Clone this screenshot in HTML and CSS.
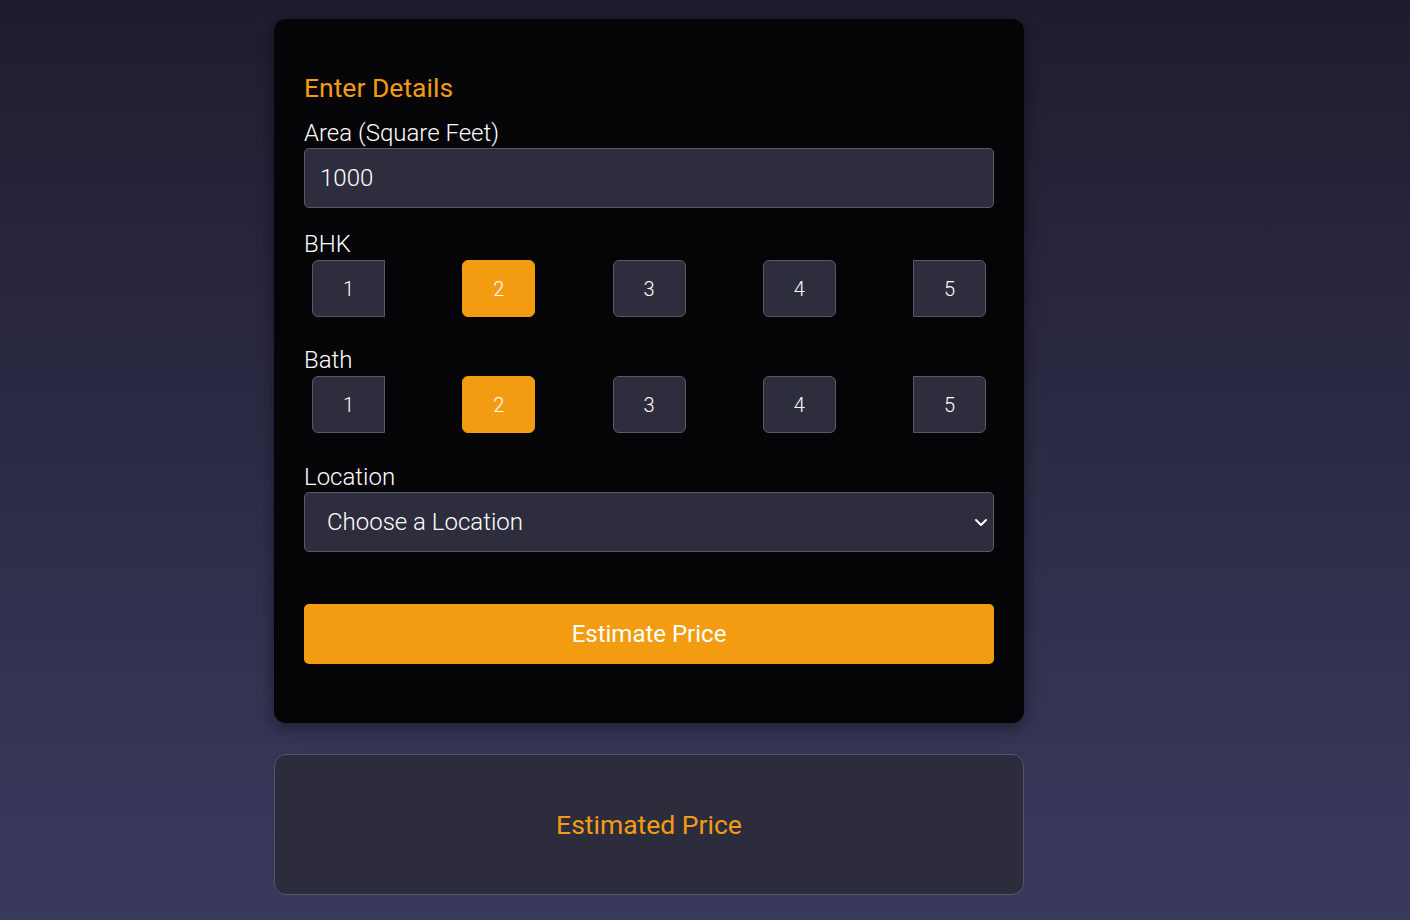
FILE: index.html
```html
<!DOCTYPE html>
<html>
<head>
<meta charset="utf-8">
<link rel="stylesheet" href="styles.css">
</head>
<body>
<main class="page">
  <form class="card">
    <h2 class="title">Enter Details</h2>
    <label class="label" for="area">Area (Square Feet)</label>
    <input class="field" id="area" type="text" value="1000">

    <div class="label group-label">BHK</div>
    <div class="switch">
      <span class="opt first">1</span>
      <span class="opt active">2</span>
      <span class="opt">3</span>
      <span class="opt">4</span>
      <span class="opt last">5</span>
    </div>

    <div class="label group-label">Bath</div>
    <div class="switch">
      <span class="opt first">1</span>
      <span class="opt active">2</span>
      <span class="opt">3</span>
      <span class="opt">4</span>
      <span class="opt last">5</span>
    </div>

    <label class="label group-label loc-label" for="loc">Location</label>
    <div class="select">
      <span class="select-text">Choose a Location</span>
      <svg class="chev" width="14" height="9" viewBox="0 0 14 9"><path d="M2 2 L7 7 L12 2" fill="none" stroke="#fff" stroke-width="2" stroke-linecap="round" stroke-linejoin="round"/></svg>
    </div>

    <button class="submit" type="button">Estimate Price</button>
  </form>

  <section class="result">
    <h2 class="result-text">Estimated Price</h2>
  </section>
</main>
</body>
</html>
```
FILE: styles.css
```css
html, body {
  margin: 0;
  padding: 0;
}
body {
  min-height: 920px;
  background: linear-gradient(to bottom, #1e1d2f 0%, #3a3a5e 100%);
  font-family: Roboto, "Noto Sans", sans-serif;
  color: #ffffff;
}
.page {
  width: 750px;
  margin-left: 274px;
  padding-top: 19px;
  display: flex;
  flex-direction: column;
  gap: 31px;
}
.card {
  background: #050508;
  border-radius: 12px;
  padding: 50px 30px 59px;
  display: flex;
  flex-direction: column;
  box-shadow: 0 4px 16px rgba(0, 0, 0, 0.45);
}
.title {
  margin: 0 0 12px;
  color: #f39c12;
  font-size: 26.5px;
  font-weight: 400;
  line-height: 38px;
}
.label {
  font-size: 24px;
  font-weight: 300;
  line-height: 29px;
  color: #ffffff;
}
.group-label {
  margin-top: 22px;
}
.switch + .group-label {
  margin-top: 29px;
}
.switch + .loc-label {
  margin-top: 30px;
}
.field {
  box-sizing: border-box;
  height: 60px;
  width: 100%;
  margin: 0;
  padding: 0 15px;
  background: #2e2d3d;
  border: 1px solid #5a5a66;
  border-radius: 5px;
  color: #ffffff;
  font-family: Roboto, sans-serif;
  font-size: 24px;
  font-weight: 300;
  outline: none;
}
.switch {
  display: flex;
  justify-content: space-between;
  padding: 0 8px;
  margin-top: 1px;
}
.opt {
  box-sizing: border-box;
  width: 73px;
  height: 57px;
  display: flex;
  align-items: center;
  justify-content: center;
  background: #2e2d3d;
  border: 1px solid #5a5a66;
  border-radius: 6px;
  font-size: 20px;
  font-weight: 300;
  color: #ffffff;
}
.opt.first {
  border-radius: 6px 0 0 6px;
}
.opt.last {
  border-radius: 0 6px 6px 0;
}
.opt.active {
  background: #f39c12;
  border-color: #f39c12;
}
.select {
  box-sizing: border-box;
  height: 60px;
  display: flex;
  align-items: center;
  justify-content: space-between;
  padding: 0 5px 0 22px;
  background: #2e2d3d;
  border: 1px solid #5a5a66;
  border-radius: 5px;
  font-size: 24px;
  font-weight: 300;
}
.submit {
  margin-top: 52px;
  height: 60px;
  border: none;
  border-radius: 5px;
  background: #f39c12;
  color: #ffffff;
  font-family: Roboto, sans-serif;
  font-size: 24px;
  font-weight: 400;
}
.result {
  box-sizing: border-box;
  height: 141px;
  background: #2d2c3c;
  border: 1px solid #55556a;
  border-radius: 12px;
  display: flex;
  align-items: center;
  justify-content: center;
}
.result-text {
  margin: 0;
  color: #f39c12;
  font-size: 26.5px;
  font-weight: 400;
}
```
